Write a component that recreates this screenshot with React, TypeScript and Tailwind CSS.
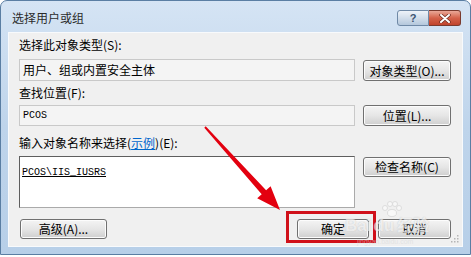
import React from 'react';

const cjk = "font-['Noto_Sans_CJK_SC','Noto_Sans',sans-serif]";

interface WinButtonProps {
    label: string;
    className?: string;
}

const WinButton: React.FC<WinButtonProps> = ({ label, className = '' }) => (
    <div
        className={`flex items-center justify-center rounded-[3px] border border-[#707070] bg-gradient-to-b from-[#f4f4f4] via-[#e6e6e6] to-[#cfcfcf] text-[12px] leading-none text-black shadow-[inset_0_0_0_1px_#fcfcfc] ${className}`}
    >
        {label}
    </div>
);

const Arrow: React.FC = () => (
    <svg className="pointer-events-none absolute inset-0" width={471} height={257} viewBox="0 0 471 257">
        <polygon
            points="205.7,126.3 266.1,190.2 270.6,186.2 280,210 257.2,198.2 261.7,194.2 204.3,127.7"
            fill="#e3000f"
        />
    </svg>
);

const Grip: React.FC = () => (
    <svg className="absolute bottom-[3px] right-[3px]" width={9} height={9} viewBox="0 0 9 9">
        {[[7, 1], [4, 4], [7, 4], [1, 7], [4, 7], [7, 7]].map(([x, y]) => (
            <rect key={`${x}-${y}`} x={x} y={y} width={1.5} height={1.5} fill="#b5b5b5" />
        ))}
    </svg>
);

const Watermark: React.FC = () => (
    <div className="pointer-events-none absolute left-[345px] top-[201px] flex w-[100px] flex-col items-start opacity-70">
        <svg className="ml-[36px]" width={22} height={16} viewBox="0 0 22 16">
            <g fill="#ffffff" stroke="#c8c8c8" strokeWidth={0.8} opacity={0.85}>
                <circle cx={4} cy={7} r={2.5} />
                <circle cx={9} cy={3} r={2.5} />
                <circle cx={14} cy={3} r={2.5} />
                <circle cx={18} cy={7} r={2.5} />
                <ellipse cx={11} cy={12} rx={4.5} ry={3.5} />
            </g>
        </svg>
        <div className="-mt-[1px] flex items-baseline text-[17px] font-bold leading-none text-white/80 [text-shadow:0_0_1px_#a8a8a8]">
            <span className="font-['Liberation_Sans',sans-serif]">Bai</span>
            <span className="ml-[2px] font-['Liberation_Sans',sans-serif]">du</span>
            <span className={`ml-[3px] text-[16px] ${cjk}`}>经验</span>
        </div>
        <div className="mt-[4px] pl-[12px] font-['Liberation_Sans',sans-serif] text-[7px] leading-none text-[#d8d8d8]/80">
            jingyan.baidu.com
        </div>
    </div>
);

export default function App() {
    return (
        <div className={`relative h-[257px] w-[471px] overflow-hidden bg-white ${cjk}`}>
            <div className="flex h-[255px] flex-col rounded-t-[7px] border border-[#5a7ea3] bg-gradient-to-b from-[#d5e4f4] via-[#bed4eb] to-[#b7cfe8]">
                {/* title bar */}
                <div className="flex h-[31px] shrink-0 items-start pl-[11px] pr-[9px]">
                    <div className="mt-[9px] text-[12px] leading-[16px] text-[#2b2b2b]">选择用户或组</div>
                    <div className="ml-auto mt-[9px] flex h-[16px]">
                        <div className="flex w-[32px] items-center justify-center rounded-l-[3px] border border-[#6f89a6] bg-gradient-to-b from-[#eef3f9] via-[#d2deeb] to-[#b4c7dc] font-['Liberation_Sans',sans-serif] text-[11px] font-bold leading-none text-[#3d5572]">
                            ?
                        </div>
                        <div className="flex w-[32px] items-center justify-center rounded-r-[3px] border border-l-0 border-[#7a3a2e] bg-gradient-to-b from-[#e9a898] via-[#d4624a] to-[#c0432c]">
                            <svg width={12} height={9} viewBox="0 0 12 9">
                                <path d="M2 1 L10 8 M10 1 L2 8" stroke="#6b2a1e" strokeWidth={3.4} strokeLinecap="round" />
                                <path d="M2 1 L10 8 M10 1 L2 8" stroke="#ffffff" strokeWidth={2} strokeLinecap="round" />
                            </svg>
                        </div>
                    </div>
                </div>

                {/* content */}
                <div className="relative mx-[7px] mb-[7px] flex flex-1 flex-col border border-[#f8fafc] bg-[#f0f0f0] pl-[10px] pr-[11px] text-[12px] leading-[16px] text-black">
                    <div className="mt-[4px]">选择此对象类型(S):</div>
                    <div className="mt-[6px] flex items-start">
                        <div className="flex h-[22px] w-[336px] items-center border border-[#c9c9c9] bg-[#f4f4f4] pl-[3px] text-[12px]">
                            用户、组或内置安全主体
                        </div>
                        <WinButton label="对象类型(O)..." className="ml-[8px] mt-[1px] h-[21px] w-[88px]" />
                    </div>

                    <div className="mt-[4px]">查找位置(F):</div>
                    <div className="mt-[4px] flex items-start">
                        <div className="flex h-[21px] w-[336px] items-center border border-[#c9c9c9] bg-[#f4f4f4] pl-[3px] font-['Liberation_Mono',monospace] text-[10px]">
                            PCOS
                        </div>
                        <WinButton label="位置(L)..." className="ml-[8px] h-[21px] w-[88px]" />
                    </div>

                    <div className="mt-[9px]">
                        输入对象名称来选择(<span className="text-[#0066cc] underline">示例</span>)(E):
                    </div>
                    <div className="mt-[5px] flex items-start">
                        <div className="h-[52px] w-[336px] border border-[#aaaaaa] border-l-[#5e5e5e] border-t-[#5e5e5e] bg-white pl-[2px] pt-[5px]">
                            <span className="font-['Liberation_Mono',monospace] text-[10px] leading-[12px] underline">
                                PCOS\IIS_IUSRS
                            </span>
                        </div>
                        <WinButton label="检查名称(C)" className="ml-[8px] mt-[1px] h-[20px] w-[88px]" />
                    </div>

                    <div className="mt-[11px] flex items-start">
                        <WinButton label="高级(A)..." className="ml-[1px] h-[20px] w-[87px]" />
                        <WinButton label="确定" className="ml-auto h-[20px] w-[72px]" />
                        <WinButton label="取消" className="ml-[9px] h-[20px] w-[73px]" />
                    </div>
                    <Grip />
                </div>
            </div>

            {/* annotations */}
            <div className="pointer-events-none absolute left-[286px] top-[211px] h-[32px] w-[90px] border-[3px] border-[#d0101a]" />
            <Watermark />
            <Arrow />
        </div>
    );
}
